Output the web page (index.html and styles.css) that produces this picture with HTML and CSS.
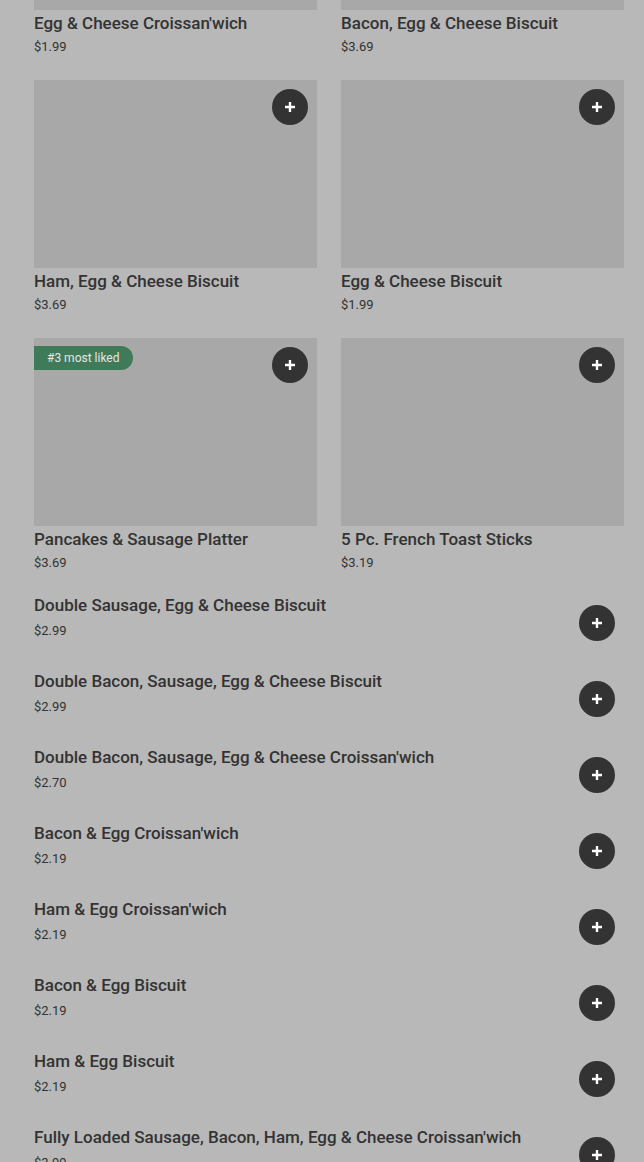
FILE: index.html
```html
<!DOCTYPE html>
<html lang="en">
  <head>
    <meta charset="utf-8" />
    <meta name="viewport" content="width=device-width, initial-scale=1" />
    <title>Breakfast menu</title>
    <link rel="stylesheet" href="styles.css">
  </head>
  <body>
    <main class="menu">
      <div class="grid">
        <div class="card">
          <div class="photo"><button class="add" aria-label="Add"><svg viewBox="0 0 12 12"><path d="M6 1v10M1 6h10" /></svg></button></div>
          <h3 class="name">Egg &amp; Cheese Croissan'wich</h3>
          <p class="price">$1.99</p>
        </div>
        <div class="card">
          <div class="photo"><button class="add" aria-label="Add"><svg viewBox="0 0 12 12"><path d="M6 1v10M1 6h10" /></svg></button></div>
          <h3 class="name">Bacon, Egg &amp; Cheese Biscuit</h3>
          <p class="price">$3.69</p>
        </div>
        <div class="card">
          <div class="photo"><button class="add" aria-label="Add"><svg viewBox="0 0 12 12"><path d="M6 1v10M1 6h10" /></svg></button></div>
          <h3 class="name">Ham, Egg &amp; Cheese Biscuit</h3>
          <p class="price">$3.69</p>
        </div>
        <div class="card">
          <div class="photo"><button class="add" aria-label="Add"><svg viewBox="0 0 12 12"><path d="M6 1v10M1 6h10" /></svg></button></div>
          <h3 class="name">Egg &amp; Cheese Biscuit</h3>
          <p class="price">$1.99</p>
        </div>
        <div class="card">
          <div class="photo">
            <span class="badge">#3 most liked</span>
            <button class="add" aria-label="Add"><svg viewBox="0 0 12 12"><path d="M6 1v10M1 6h10" /></svg></button>
          </div>
          <h3 class="name">Pancakes &amp; Sausage Platter</h3>
          <p class="price">$3.69</p>
        </div>
        <div class="card">
          <div class="photo"><button class="add" aria-label="Add"><svg viewBox="0 0 12 12"><path d="M6 1v10M1 6h10" /></svg></button></div>
          <h3 class="name">5 Pc. French Toast Sticks</h3>
          <p class="price">$3.19</p>
        </div>
      </div>

      <ul class="list">
        <li class="row">
          <div><h3 class="name">Double Sausage, Egg &amp; Cheese Biscuit</h3><p class="price">$2.99</p></div>
          <button class="add" aria-label="Add"><svg viewBox="0 0 12 12"><path d="M6 1v10M1 6h10" /></svg></button>
        </li>
        <li class="row">
          <div><h3 class="name">Double Bacon, Sausage, Egg &amp; Cheese Biscuit</h3><p class="price">$2.99</p></div>
          <button class="add" aria-label="Add"><svg viewBox="0 0 12 12"><path d="M6 1v10M1 6h10" /></svg></button>
        </li>
        <li class="row">
          <div><h3 class="name">Double Bacon, Sausage, Egg &amp; Cheese Croissan'wich</h3><p class="price">$2.70</p></div>
          <button class="add" aria-label="Add"><svg viewBox="0 0 12 12"><path d="M6 1v10M1 6h10" /></svg></button>
        </li>
        <li class="row">
          <div><h3 class="name">Bacon &amp; Egg Croissan'wich</h3><p class="price">$2.19</p></div>
          <button class="add" aria-label="Add"><svg viewBox="0 0 12 12"><path d="M6 1v10M1 6h10" /></svg></button>
        </li>
        <li class="row">
          <div><h3 class="name">Ham &amp; Egg Croissan'wich</h3><p class="price">$2.19</p></div>
          <button class="add" aria-label="Add"><svg viewBox="0 0 12 12"><path d="M6 1v10M1 6h10" /></svg></button>
        </li>
        <li class="row">
          <div><h3 class="name">Bacon &amp; Egg Biscuit</h3><p class="price">$2.19</p></div>
          <button class="add" aria-label="Add"><svg viewBox="0 0 12 12"><path d="M6 1v10M1 6h10" /></svg></button>
        </li>
        <li class="row">
          <div><h3 class="name">Ham &amp; Egg Biscuit</h3><p class="price">$2.19</p></div>
          <button class="add" aria-label="Add"><svg viewBox="0 0 12 12"><path d="M6 1v10M1 6h10" /></svg></button>
        </li>
        <li class="row">
          <div><h3 class="name">Fully Loaded Sausage, Bacon, Ham, Egg &amp; Cheese Croissan'wich</h3><p class="price">$3.99</p></div>
          <button class="add" aria-label="Add"><svg viewBox="0 0 12 12"><path d="M6 1v10M1 6h10" /></svg></button>
        </li>
      </ul>
    </main>
  </body>
</html>
```

FILE: styles.css
```css
*,
*::before,
*::after {
  box-sizing: border-box;
  margin: 0;
  padding: 0;
}

html,
body {
  background: #b8b8b8;
  overflow: hidden;
}

body {
  color: #333;
  font-family: Roboto, "Liberation Sans", sans-serif;
  height: 1162px;
}

.menu {
  padding: 0 20px 0 34px;
}

.grid {
  display: grid;
  gap: 23px 24px;
  grid-template-columns: 1fr 1fr;
  margin-top: -178px;
}

.photo {
  background: #a8a8a8;
  height: 188px;
  position: relative;
}

.name {
  font-size: 17px;
  font-weight: 500;
  line-height: 22px;
  margin-top: 2px;
}

.price {
  font-size: 13px;
  line-height: 20px;
  margin-top: 3px;
}

.add {
  align-items: center;
  background: #333;
  border: 0;
  border-radius: 50%;
  display: flex;
  flex: none;
  height: 36px;
  justify-content: center;
  width: 36px;
}

.add svg {
  fill: none;
  height: 12px;
  stroke: #fff;
  stroke-width: 2.4;
  width: 12px;
}

.photo .add {
  position: absolute;
  right: 9px;
  top: 9px;
}

.badge {
  background: #3f7b59;
  border-radius: 0 12px 12px 0;
  color: #e6e6e6;
  font-size: 12px;
  left: 0;
  line-height: 24px;
  padding: 0 13px;
  position: absolute;
  top: 8px;
}

.list {
  list-style: none;
  margin-top: 19px;
}

.row {
  align-items: flex-start;
  display: flex;
  justify-content: space-between;
  padding-right: 9px;
  height: 76px;
}

.row .price {
  margin-top: 5px;
}

.row .add {
  margin-top: 13px;
}
```
